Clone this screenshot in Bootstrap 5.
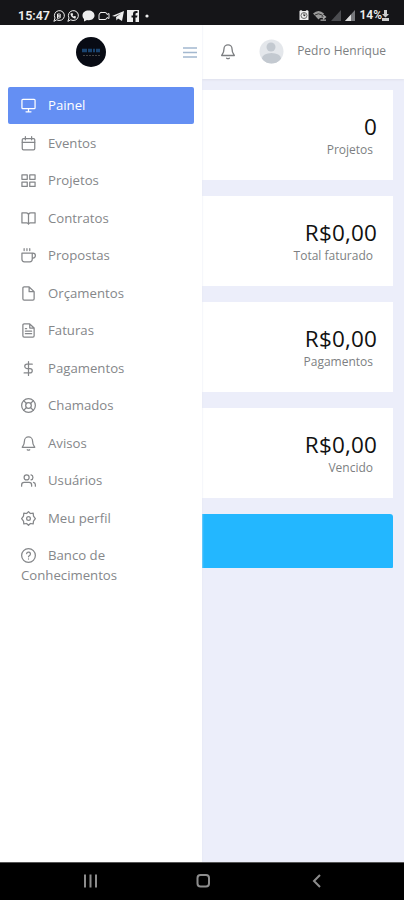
<!DOCTYPE html>
<html lang="pt-BR">
<head>
<meta charset="utf-8">
<meta name="viewport" content="width=device-width, initial-scale=1">
<title>Painel</title>
<link href="https://cdn.jsdelivr.net/npm/bootstrap@5.3.0/dist/css/bootstrap.min.css" rel="stylesheet">
<style>
body{font-family:"Open Sans","Noto Sans",sans-serif;font-size:13px;color:#7d7f82;background:#eceefa}
svg{display:block;flex:none}
.ln{fill:none;stroke:currentColor;stroke-width:2;stroke-linecap:round;stroke-linejoin:round}
.phone{height:900px}
.status{height:25px;background:#151518;color:#eee;padding:6px 15px 0 18px;font:600 12px/19px Roboto,sans-serif}
.clock{width:32px;font-size:12.5px}
.glyphs{gap:2.7px}
.side{width:202px;background:#fff;padding:0 8px;box-shadow:0 0 2px #e4e6f1;z-index:1}
.brand{height:54px;margin-bottom:8px;padding-left:68px;margin-right:-3px}
.logo{width:30px;height:30px;background:#080b14}
.burger{color:#a3b8cf}
.menu{gap:.5px}
.menu .nav-link{height:37px;padding:9px 13px 0 13px;color:#85878a;font-size:13.2px;line-height:19.5px;border-radius:2px}
.menu .nav-link svg{display:inline-block;width:15px;height:15px;margin-right:12px;vertical-align:-3px}
.menu .nav-link.active{background:#648ff3;color:#fff}
.menu .tall{height:58px}
.topbar{height:54px;background:#fff;padding:0 18px 2px;box-shadow:0 1px 2px #dfe1ec}
.avatar{margin-right:13px}
.user{font-size:12px;padding-bottom:1px}
.cards{padding:11px 11px 0 0}
.stat{height:90px;margin-bottom:16px;border-radius:0;padding:25px 16px 0 0}
.amount{font-size:22.5px;line-height:24px;color:#111;letter-spacing:.2px;margin-right:-.2px}
.label{font-size:12px;line-height:17px;margin-top:2px;padding-right:4px}
.banner{height:54px;background:#23b7ff;border-radius:0 3px 1px 0}
.keys{height:38px;background:#000;color:#8d8d8d;border-top:1px solid #555}
</style>
<script src="https://cdn.jsdelivr.net/npm/bootstrap@5.3.0/dist/js/bootstrap.bundle.min.js"></script>
</head>
<body>
<div class="phone d-flex flex-column overflow-hidden">
<div class="status d-flex align-items-center justify-content-between">
 <div class="d-flex align-items-center glyphs">
  <span class="clock">15:47</span>
  <svg width="12" height="12" viewBox="0 0 24 24" class="ln"><path d="M2 22l2-6a10 10 0 1 1 4 4z"/><path d="M9 16V8h4a2 2 0 0 1 0 4H9h4a2 2 0 0 1 0 4z"/></svg>
  <svg width="12" height="12" viewBox="0 0 24 24" class="ln"><path d="M2 22l2-6a10 10 0 1 1 4 4z"/><path d="M7 7c0 5 4 10 10 10l1-4-3-1-2 1-2-2 1-2-1-3z" fill="currentColor" stroke="none"/></svg>
  <svg width="13" height="12" viewBox="0 0 24 24" fill="currentColor"><path d="M12 1C5 1 0 5 0 11c0 3 1 5 3 7v5l6-3c9 2 15-3 15-9S19 1 12 1z"/></svg>
  <svg width="12" height="12" viewBox="0 0 24 24" class="ln"><path d="M6 5h8a4 4 0 0 1 4 4l4-2v10l-4-2a4 4 0 0 1-4 4H2v-9a5 5 0 0 1 4-5z"/></svg>
  <svg width="12" height="12" viewBox="0 0 24 24" fill="currentColor"><path d="M0 12L24 2l-4 20-8-5-3 4-1-7 10-7-12 6z"/></svg>
  <svg width="12" height="12" viewBox="0 0 24 24"><path fill="currentColor" d="M0 0h24v24h-7v-9h3l1-4h-4V8q0-2 2-2h2V2h-3q-6 0-6 6v3H9v4h3v9H0z"/></svg>
  <svg width="10" height="12" viewBox="0 0 10 12"><circle cx="5" cy="6" r="1.600" fill="currentColor"/></svg>
 </div>
 <div class="d-flex align-items-center gap-1">
  <svg width="10" height="11" viewBox="0 0 20 22"><path fill="currentColor" d="M1 2l3-2 3 2h6l3-2 3 2v18H1z"/><circle cx="10" cy="11" r="6" fill="none" stroke="#444" stroke-width="1.500"/><path d="M10 7v5l3-2" fill="none" stroke="#222" stroke-width="2"/></svg>
  <svg width="14" height="12" viewBox="0 0 28 24"><path d="M0 7q11-10 22 0l-5 6-6 6z" fill="#999"/><path d="M4 10q7-5 14 0" fill="none" stroke="#333" stroke-width="2"/><path d="M14 14h11M20 10l5 4-5 4M26 20H15" fill="none" stroke="#aaa" stroke-width="2.500"/></svg>
  <svg width="10" height="11" viewBox="0 0 10 11"><path d="M10 0v11H0z" fill="#4b4c50"/></svg>
  <svg width="10" height="11" viewBox="0 0 10 11"><path d="M10 0v11H0z" fill="#77787c"/><path d="M6 4.500V11H0z" fill="#ddd"/></svg>
  <span class="d-flex align-items-center">14%<svg width="7" height="11" viewBox="0 0 7 11"><path d="M2 0h3v4h2L3.500 7.500 0 4h2zM0 8h7v3H0z" fill="#ccc"/></svg></span>
 </div>
</div>
<div class="d-flex flex-grow-1 overflow-hidden">
 <aside class="side flex-shrink-0">
  <div class="brand d-flex align-items-center justify-content-between">
   <div class="logo rounded-circle d-flex align-items-center justify-content-center">
    <svg width="22" height="11" viewBox="0 0 22 11"><path d="M2 3.500h5M8 3.500h4M13 3.500h2M16 3.500h4" stroke="#1a4470" stroke-width="3.500"/><path d="M3 8.500h17" stroke="#444" stroke-dasharray="2 1"/></svg>
   </div>
   <svg class="burger" width="14" height="12" viewBox="0 0 14 12"><path d="M0 2h14M0 6.500h14M0 11h14" stroke="currentColor" stroke-width="1.400"/></svg>
  </div>
  <nav class="menu nav flex-column">
   <a class="nav-link active"><svg viewBox="0 0 24 24" class="ln"><rect x="1.500" y="2" width="21" height="15" rx="1.500"/><path d="M8 22h8M12 17v5"/></svg>Painel</a>
   <a class="nav-link"><svg viewBox="0 0 24 24" class="ln"><rect x="2" y="4" width="20" height="18" rx="2"/><path d="M7 1v5M17 1v5M2 10h20"/></svg>Eventos</a>
   <a class="nav-link"><svg viewBox="0 0 24 24" class="ln"><path d="M1.500 3h8.500v7H1.500zM14 3h8.500v7H14zM14 14.500h8.500v7H14zM1.500 14.500h8.500v7H1.500z"/></svg>Projetos</a>
   <a class="nav-link"><svg viewBox="0 0 24 24" class="ln"><path d="M1.500 3h7a3.500 3.500 0 0 1 3.500 3.500V21a3 3 0 0 0-3-2H1.500zM22.500 3h-7A3.500 3.500 0 0 0 12 6.500V21a3 3 0 0 1 3-2h7.500z"/></svg>Contratos</a>
   <a class="nav-link"><svg viewBox="0 0 24 24" class="ln"><path d="M18 8h1a4 4 0 0 1 0 8h-1M1.500 8H18v10a4 4 0 0 1-4 4H5.500a4 4 0 0 1-4-4zM5 1v3M9.500 1v3M14 1v3"/></svg>Propostas</a>
   <a class="nav-link"><svg viewBox="0 0 24 24" class="ln"><path d="M13 1.500H5a2 2 0 0 0-2 2v17a2 2 0 0 0 2 2h14a2 2 0 0 0 2-2V9zM13 1.500V9h8"/></svg>Orçamentos</a>
   <a class="nav-link"><svg viewBox="0 0 24 24" class="ln"><path d="M14 1.500H5a2 2 0 0 0-2 2v17a2 2 0 0 0 2 2h14a2 2 0 0 0 2-2V8zM14 1.500V8h7M7 13h10M7 17h10M7 9h2"/></svg>Faturas</a>
   <a class="nav-link"><svg viewBox="0 0 24 24" class="ln"><path d="M12 1v22M18 5H9.500a3.500 3.500 0 0 0 0 7h5a3.500 3.500 0 0 1 0 7H5"/></svg>Pagamentos</a>
   <a class="nav-link"><svg viewBox="0 0 24 24" class="ln"><circle cx="12" cy="12" r="11"/><circle cx="12" cy="12" r="4.500"/><path d="M4.200 4.200l4.600 4.600M15.200 15.200l4.600 4.600M15.200 8.800l4.600-4.600M4.200 19.800l4.600-4.600"/></svg>Chamados</a>
   <a class="nav-link"><svg viewBox="0 0 24 24" class="ln"><path d="M18.500 8a6.500 6.500 0 0 0-13 0c0 7-3.500 9-3.500 10h20c0-1-3.500-3-3.500-10M10 22q2 1.500 4 0"/></svg>Avisos</a>
   <a class="nav-link"><svg viewBox="0 0 24 24" class="ln"><path d="M17 21v-2a4 4 0 0 0-4-4H5a4 4 0 0 0-4 4v2M23 21v-2a4 4 0 0 0-3-3.900M16 3.100a4 4 0 0 1 0 7.800"/><circle cx="9" cy="7" r="4"/></svg>Usuários</a>
   <a class="nav-link"><svg viewBox="0 0 24 24" class="ln"><circle cx="12" cy="12" r="3"/><path d="M12 1l3 3 4.500-.5.5 4.500 3 4-3 4-.5 4.500L15 20l-3 3-3-3-4.500.5L4 16l-3-4 3-4 .5-4.500L9 4z"/></svg>Meu perfil</a>
   <a class="nav-link tall"><svg viewBox="0 0 24 24" class="ln"><circle cx="12" cy="12" r="11"/><path d="M9 9a3 3 0 0 1 6 1c0 2-3 2.500-3 4M12 17.500v.1"/></svg>Banco de<br>Conhecimentos</a>
  </nav>
 </aside>
 <main class="flex-grow-1">
  <header class="topbar d-flex align-items-center">
   <svg width="16" height="17" viewBox="0 0 24 24" class="ln"><path d="M18 8a6 6 0 0 0-12 0c0 7-3.500 9-3.500 10h19c0-1-3.500-3-3.500-10M10 22q2 1.500 4 0"/></svg>
   <svg class="avatar ms-auto" width="25" height="25" viewBox="0 0 25 25"><defs><clipPath id="av"><circle cx="12.500" cy="12.500" r="12"/></clipPath></defs><g clip-path="url(#av)"><path d="M0 0h25v25H0z" fill="#e4e7eb"/><circle cx="12" cy="8" r="4.500" fill="#c3c9d0"/><ellipse cx="12.500" cy="19.500" rx="9.500" ry="5.500" fill="#c3c9d0"/></g></svg>
   <span class="user">Pedro Henrique</span>
  </header>
  <section class="cards">
   <div class="card border-0 stat text-end"><div class="amount">0</div><div class="label">Projetos</div></div>
   <div class="card border-0 stat text-end"><div class="amount">R$0,00</div><div class="label">Total faturado</div></div>
   <div class="card border-0 stat text-end"><div class="amount">R$0,00</div><div class="label">Pagamentos</div></div>
   <div class="card border-0 stat text-end"><div class="amount">R$0,00</div><div class="label">Vencido</div></div>
   <div class="banner"></div>
  </section>
 </main>
</div>
<div class="keys d-flex align-items-center">
 <svg width="404" height="36" viewBox="0 0 404 36" fill="none" stroke="currentColor" stroke-width="2"><path d="M85 10.500v13M90.500 10.500v13M96 10.500v13M320 11l-6 6 6 6"/><rect x="197.500" y="11" width="11.500" height="11.500" rx="3"/></svg>
</div>
</div>
</body>
</html>
